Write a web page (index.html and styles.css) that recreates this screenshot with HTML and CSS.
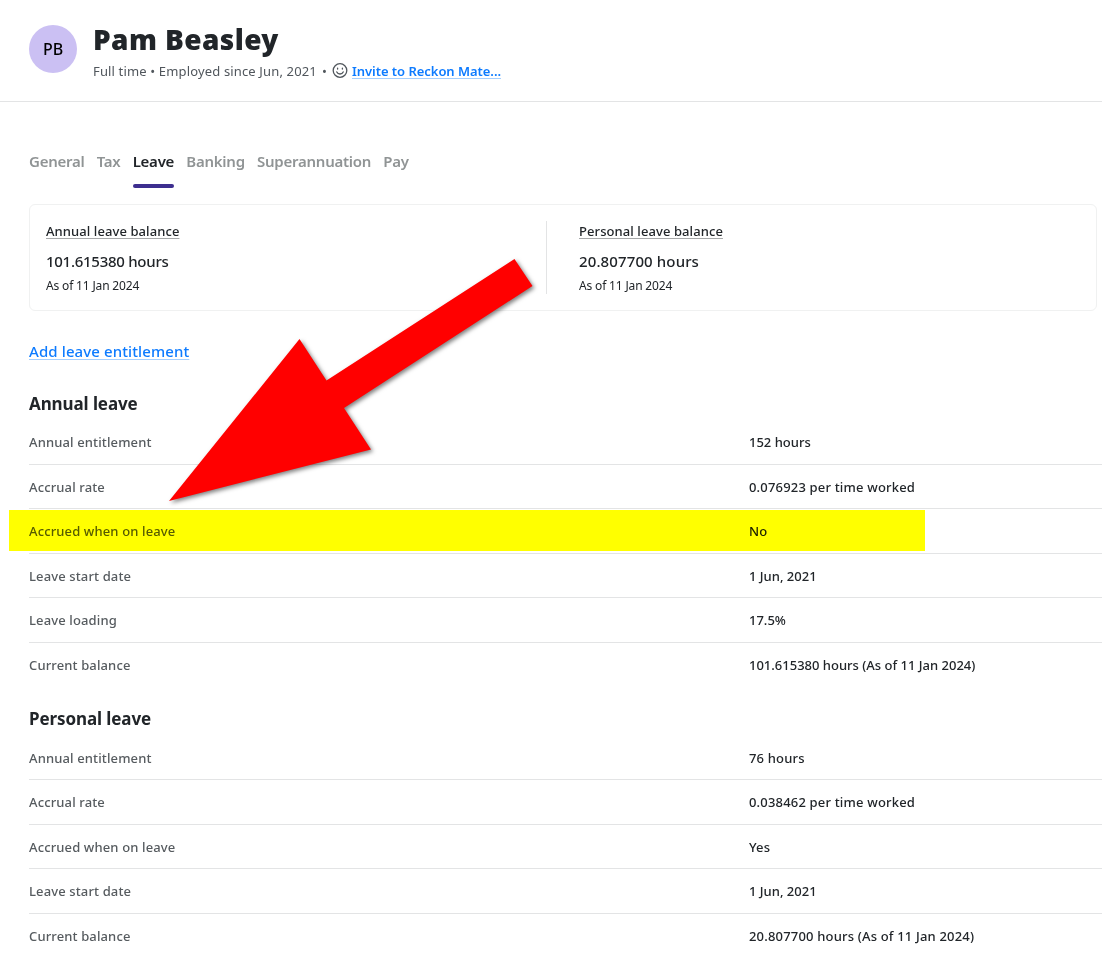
FILE: index.html
```
<!DOCTYPE html>
<html lang="en">

<head>
    <meta charset="UTF-8">
    <meta name="viewport" content="width=device-width, initial-scale=1.0">
    <title>Pam Beasley - Leave</title>
    <link rel="stylesheet" href="styles.css">
</head>

<body>
    <header class="employee-header">
        <div class="avatar">PB</div>
        <div class="employee-info">
            <h1>Pam Beasley</h1>
            <div class="employee-meta">
                <span>Full time &bull; Employed since Jun, 2021</span>
                <span class="dot">&bull;</span>
                <svg class="smile" width="16" height="16" viewBox="0 0 16 16" fill="none" stroke="#50565c" stroke-width="1.3" stroke-linecap="round">
                    <circle cx="8" cy="7.500" r="6.800" />
                    <path d="M4.800 8.900c.6 1.400 1.700 2.100 3.200 2.100s2.600-.7 3.200-2.100" />
                    <path d="M5.600 5.200v.9M10.400 5.200v.9" />
                </svg>
                <a href="#" class="link invite">Invite to Reckon Mate...</a>
            </div>
        </div>
    </header>

    <main class="content">
        <nav class="tabs">
            <a class="tab">General</a>
            <a class="tab">Tax</a>
            <a class="tab active">Leave</a>
            <a class="tab">Banking</a>
            <a class="tab">Superannuation</a>
            <a class="tab">Pay</a>
        </nav>

        <section class="balances">
            <div class="balance">
                <div class="balance-title"><span>Annual leave balance</span></div>
                <div class="balance-hours tight">101.615380 hours</div>
                <div class="balance-date">As of 11 Jan 2024</div>
            </div>
            <div class="balance">
                <div class="balance-title"><span>Personal leave balance</span></div>
                <div class="balance-hours">20.807700 hours</div>
                <div class="balance-date">As of 11 Jan 2024</div>
            </div>
        </section>

        <a href="#" class="link add-link">Add leave entitlement</a>

        <section class="leave">
            <h2>Annual leave</h2>
            <div class="row"><span class="label">Annual entitlement</span><span class="value tight">152 hours</span></div>
            <div class="row"><span class="label">Accrual rate</span><span class="value">0.076923 per time worked</span></div>
            <div class="row marked"><span class="label">Accrued when on leave</span><span class="value">No</span></div>
            <div class="row"><span class="label">Leave start date</span><span class="value tight">1 Jun, 2021</span></div>
            <div class="row"><span class="label">Leave loading</span><span class="value tight">17.5%</span></div>
            <div class="row"><span class="label">Current balance</span><span class="value tight">101.615380 hours (As of 11 Jan 2024)</span></div>
        </section>

        <section class="leave">
            <h2>Personal leave</h2>
            <div class="row"><span class="label">Annual entitlement</span><span class="value">76 hours</span></div>
            <div class="row"><span class="label">Accrual rate</span><span class="value">0.038462 per time worked</span></div>
            <div class="row"><span class="label">Accrued when on leave</span><span class="value">Yes</span></div>
            <div class="row"><span class="label">Leave start date</span><span class="value tight">1 Jun, 2021</span></div>
            <div class="row"><span class="label">Current balance</span><span class="value">20.807700 hours (As of 11 Jan 2024)</span></div>
        </section>
    </main>

    <!-- arrow pointing at the marked row -->
    <svg class="arrow" width="380" height="260" viewBox="0 0 380 260">
        <polygon points="9,251 139.500,89 166.500,130.500 354.500,9 372.500,36 184,158 211,199.500" fill="#ff0000" />
    </svg>
</body>

</html>
```

FILE: styles.css
```
* {
    box-sizing: border-box;
}

body {
    position: relative;
    width: 1102px;
    height: 971px;
    margin: 0;
    overflow: hidden;
    background: #fff;
    color: #212529;
    font-family: "Noto Sans", "Open Sans", sans-serif;
    font-size: 13px;
}

h1,
h2 {
    margin: 0;
}

.employee-header {
    display: flex;
    gap: 16px;
    height: 102px;
    padding: 25px 29px 0;
    border-bottom: 1px solid #e3e4e5;
}

.avatar {
    width: 48px;
    height: 48px;
    border-radius: 50%;
    background: #cbc0f3;
    color: #000;
    font-size: 16px;
    font-weight: 500;
    line-height: 49px;
    text-align: center;
}

.employee-info h1 {
    font-size: 28px;
    font-weight: 900;
    letter-spacing: 0.4px;
    line-height: 28px;
    white-space: nowrap;
}

.employee-meta {
    display: flex;
    align-items: center;
    height: 20px;
    margin-top: 8px;
    color: #50565c;
    letter-spacing: 0.15px;
    white-space: nowrap;
}

.dot {
    margin: 0 5px;
}

.smile {
    margin-right: 4px;
}

.link {
    color: #0d7bff;
    text-decoration: underline;
    text-decoration-color: #a4cfff;
    text-decoration-thickness: 1px;
    text-underline-offset: 2px;
}

.invite {
    font-weight: 600;
    letter-spacing: -0.04px;
}

.content {
    padding: 47px 0 0 29px;
}

.tabs {
    display: flex;
    gap: 12.2px;
    height: 39px;
}

.tab {
    border-bottom: 4px solid transparent;
    color: #909495;
    font-size: 15px;
    font-weight: 600;
    letter-spacing: -0.25px;
    line-height: 24px;
}

.tab.active {
    position: relative;
    color: #212529;
}

.tab.active::after {
    content: "";
    position: absolute;
    left: 0;
    right: 0;
    bottom: -4px;
    height: 4px;
    border-radius: 2px;
    background: #3d2e8f;
}

.balances {
    display: flex;
    width: 1068px;
    height: 107px;
    margin-top: 16px;
    padding: 16px;
    border: 1px solid #f0f1f1;
    border-radius: 6px;
}

.balance {
    width: 500px;
}

.balance + .balance {
    width: 533px;
    padding-left: 32px;
    border-left: 1px solid #e3e4e5;
}

.balance-title {
    line-height: 20px;
    font-weight: 500;
    letter-spacing: 0.08px;
}

.balance-title span {
    text-decoration: underline;
    text-decoration-color: #a6a8a9;
    text-decoration-thickness: 1px;
    text-underline-offset: 2px;
}

.balance-hours {
    margin-top: 8px;
    font-size: 15px;
    font-weight: 500;
    letter-spacing: 0.12px;
    line-height: 24px;
}

.balance-hours.tight {
    letter-spacing: -0.27px;
}

.balance-date {
    margin-top: 5px;
    font-size: 12px;
    letter-spacing: -0.16px;
    line-height: 16px;
}

.add-link {
    display: inline-block;
    margin-top: 28px;
    font-size: 15px;
    font-weight: 500;
    letter-spacing: 0.1px;
    line-height: 24px;
}

.leave h2 {
    height: 24px;
    margin: 20.2px 0 4.5px;
    font-size: 17px;
    font-weight: 700;
    letter-spacing: -0.1px;
    line-height: 24px;
}

.add-link + .leave h2 {
    margin-top: 28.5px;
}

.row {
    display: flex;
    align-items: center;
    height: 44.5px;
    padding-top: 0.8px;
    border-bottom: 1px solid #e3e4e5;
    font-weight: 500;
    letter-spacing: 0.13px;
}

.row:last-child {
    border-bottom-color: transparent;
}

.label {
    width: 720px;
    color: #565b5f;
}

.value {
    letter-spacing: 0.18px;
}

.value.tight {
    letter-spacing: 0;
}

.marked {
    position: relative;
}

/* highlighter strip laid over the row text */
.marked::after {
    content: "";
    position: absolute;
    left: -20px;
    top: 1px;
    width: 916px;
    height: 41px;
    background: #ff0;
    mix-blend-mode: multiply;
}

.arrow {
    position: absolute;
    left: 160px;
    top: 250px;
    filter: drop-shadow(2px 2px 2px rgba(0, 0, 0, 0.5));
}
```
